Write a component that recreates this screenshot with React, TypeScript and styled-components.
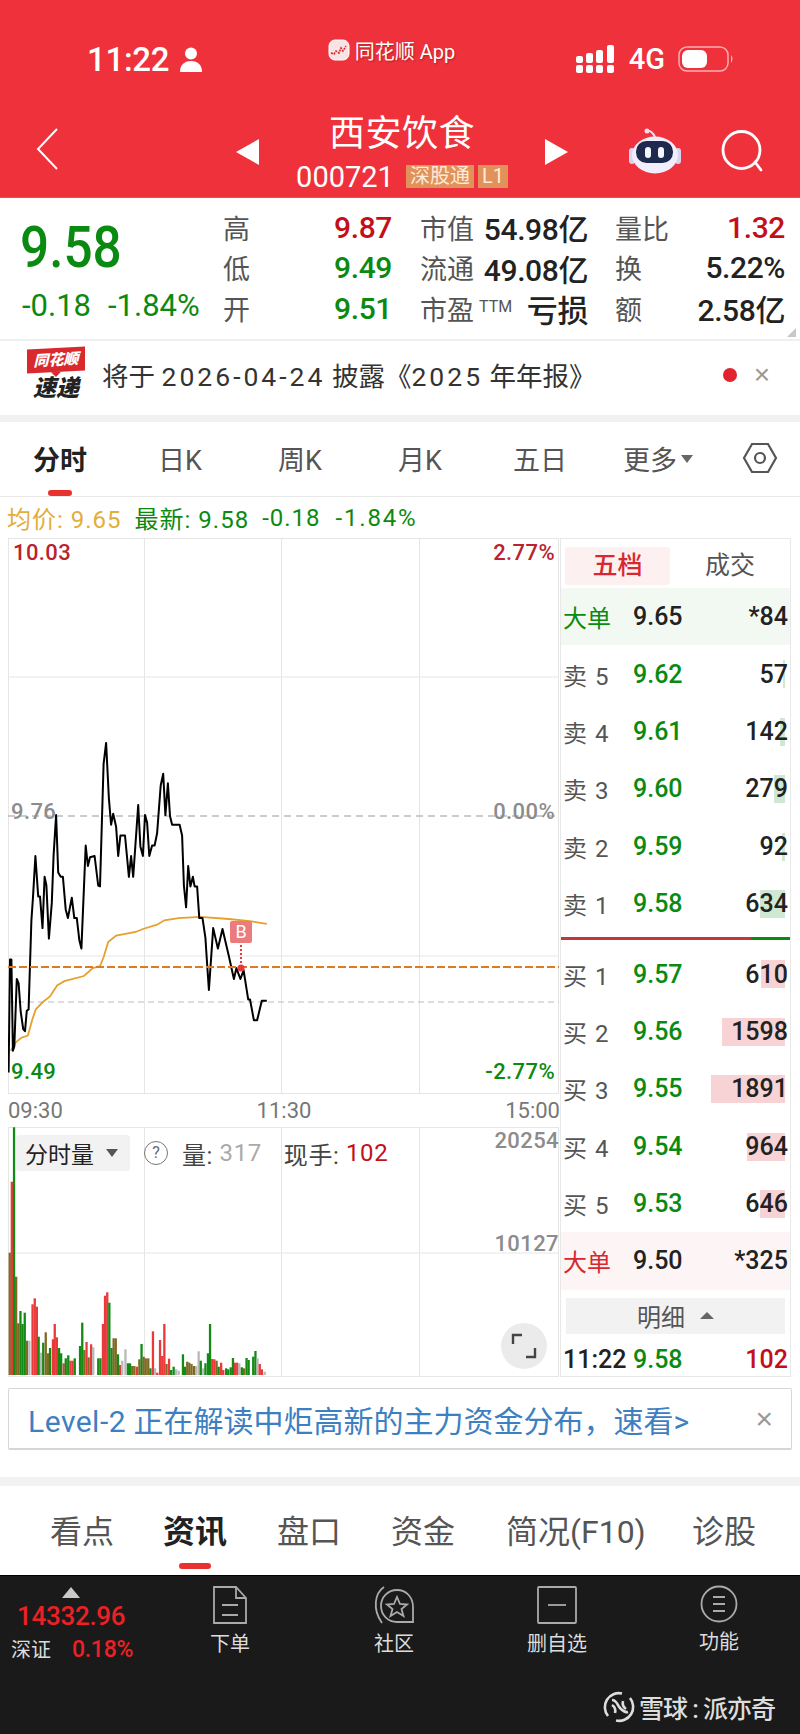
import React from "react";
import styled, { createGlobalStyle } from "styled-components";

const RED = "#c40f1a";
const GREEN = "#0b8a12";
const HEADER_RED = "#ef313b";

const GlobalStyle = createGlobalStyle`
  html, body {
    margin: 0;
    padding: 0;
    background: #fff;
  }
  body {
    font-family: Roboto, "Noto Sans CJK SC", sans-serif;
    color: #222;
  }
  * {
    box-sizing: border-box;
  }
`;

const Page = styled.div`
  width: 800px;
  height: 1734px;
  overflow: hidden;
  background: #fff;
`;

/* ---------- red header ---------- */
const Header = styled.header`
  height: 198px;
  background: ${HEADER_RED};
  color: #fff;
  border-bottom: 1px solid #d8555c;
`;

const StatusBar = styled.div`
  height: 96px;
  display: grid;
  grid-template-columns: 1fr auto 1fr;
  align-items: center;
  padding: 22px 66px 0 87px;
`;

const StatusLeft = styled.div`
  display: flex;
  align-items: center;
  gap: 10px;
  font-size: 33px;
  font-weight: 500;
  letter-spacing: -0.3px;
`;

const AppTag = styled.div`
  display: flex;
  align-items: center;
  gap: 5px;
  margin-top: -18px;
  margin-left: -38px;
  font-size: 20px;
  text-shadow: 1px 1px 2px rgba(120, 0, 0, 0.45);
`;

const StatusRight = styled.div`
  display: flex;
  justify-content: flex-end;
  align-items: center;
  gap: 13px;
  font-size: 29px;
  font-weight: 500;
`;

const NavBar = styled.div`
  height: 101px;
  display: grid;
  grid-template-columns: 1fr 400px 1fr;
  align-items: center;
`;

const BackCell = styled.div`
  padding-left: 35px;
  padding-top: 8px;
`;

const TitleCell = styled.div`
  display: flex;
  justify-content: center;
  align-items: center;
  gap: 36px;
  padding-left: 4px;
`;

const Arrow = styled.span<{ $dir: "left" | "right" }>`
  width: 0;
  height: 0;
  margin-top: 10px;
  border-top: 13px solid transparent;
  border-bottom: 13px solid transparent;
  ${({ $dir }) =>
    $dir === "left" ? "border-right: 23px solid #fff;" : "border-left: 23px solid #fff;"}
`;

const TitleBlock = styled.div`
  display: flex;
  flex-direction: column;
  align-items: center;
  width: 214px;
  margin-top: 7px;
`;

const StockName = styled.div`
  font-size: 36px;
  line-height: 50px;
  letter-spacing: 0.5px;
`;

const CodeRow = styled.div`
  display: flex;
  align-items: center;
  gap: 4px;
  margin-top: 3px;
  font-size: 29px;
  line-height: 30px;
`;

const Code = styled.span`
  margin-right: 8px;
`;

const Badge = styled.span`
  background: #e0925a;
  color: #ffe9d8;
  font-size: 20px;
  line-height: 23px;
  padding: 0 4px;
`;

const NavRight = styled.div`
  display: flex;
  justify-content: flex-end;
  align-items: center;
  gap: 40px;
  padding: 8px 37px 0 0;
`;

/* ---------- quote ---------- */
const Quote = styled.section`
  height: 143px;
  display: grid;
  grid-template-columns: 223px 169px 28px 168px 27px 170px;
  padding: 9px 15px 0 0;
  position: relative;
  border-bottom: 2px solid #f0f0f0;
`;

const PriceBlock = styled.div`
  padding-left: 20px;
  color: ${GREEN};
`;

const BigPrice = styled.div`
  font-size: 57px;
  line-height: 66px;
  font-weight: 500;
  margin-top: 8px;
  transform: scaleX(0.9);
  transform-origin: left center;
`;

const PriceChange = styled.div`
  display: flex;
  gap: 17px;
  margin-top: 8px;
  padding-left: 2px;
  font-size: 31px;
  line-height: 34px;
`;

const QuoteColumn = styled.div<{ $start?: number }>`
  display: grid;
  grid-auto-rows: 40.5px;
  grid-column: ${({ $start }) => $start ?? "auto"};
`;

const QuoteRow = styled.div`
  display: flex;
  justify-content: space-between;
  align-items: center;
`;

const QuoteLabel = styled.span`
  color: #555;
  font-size: 27px;
`;

const Ttm = styled.sup`
  font-size: 16px;
  margin-left: 5px;
  vertical-align: 8px;
  line-height: 0;
`;

const QuoteValue = styled.span<{ $color?: string; $size?: number }>`
  color: ${({ $color }) => $color ?? "#222"};
  font-size: ${({ $size }) => $size ?? 30}px;
  font-weight: 500;
  letter-spacing: -0.4px;
`;

const CornerMark = styled.span`
  position: absolute;
  right: 4px;
  bottom: 2px;
  border-left: 9px solid transparent;
  border-bottom: 9px solid #c8c8c8;
`;

/* ---------- notice ---------- */
const Notice = styled.section`
  height: 81px;
  display: flex;
  align-items: center;
  padding: 0 30px 7px 26px;
  border-bottom: 7px solid #f1f1f1;
`;

const FlashLogo = styled.div`
  width: 60px;
  margin-right: 16px;
  display: flex;
  flex-direction: column;
  align-items: center;
  font-style: italic;
  font-weight: 900;
`;

const FlashTop = styled.div`
  width: 58px;
  height: 24px;
  background: #d9292f;
  color: #fff;
  font-size: 15px;
  line-height: 24px;
  text-align: center;
  white-space: nowrap;
  transform: skewY(-3deg);
  position: relative;
  &::after {
    content: "";
    position: absolute;
    left: 24px;
    bottom: -5px;
    border-left: 5px solid transparent;
    border-right: 5px solid transparent;
    border-top: 5px solid #d9292f;
  }
`;

const FlashBottom = styled.div`
  color: #222;
  font-size: 23px;
  line-height: 24px;
  margin-top: 5px;
`;

const NoticeText = styled.div`
  flex: 1;
  font-size: 26.5px;
  color: #333;
`;

const NoticeNum = styled.span`
  letter-spacing: 3px;
`;

const Dot = styled.span`
  width: 14px;
  height: 14px;
  border-radius: 50%;
  background: #e0232e;
  margin-right: 17px;
`;

const Close = styled.span<{ $size?: number }>`
  color: #999;
  font-size: ${({ $size }) => $size ?? 28}px;
  line-height: 1;
  font-family: "Liberation Sans", sans-serif;
`;

/* ---------- period tabs ---------- */
const PeriodTabs = styled.nav`
  height: 75px;
  display: grid;
  grid-template-columns: repeat(6, 120px) 80px;
  border-bottom: 1px solid #eaeaea;
`;

const PeriodTab = styled.div<{ $active?: boolean }>`
  position: relative;
  display: flex;
  justify-content: center;
  align-items: center;
  padding-bottom: 2px;
  font-size: 27px;
  color: ${({ $active }) => ($active ? "#222" : "#555")};
  font-weight: ${({ $active }) => ($active ? 700 : 400)};
  ${({ $active }) =>
    $active &&
    `&::after {
      content: "";
      position: absolute;
      bottom: 0;
      left: 48px;
      width: 24px;
      height: 6px;
      border-radius: 3px;
      background: #e8322f;
    }`}
`;

const MoreCaret = styled.span`
  margin-left: 4px;
  margin-right: 4px;
  margin-top: 2px;
  border-left: 6px solid transparent;
  border-right: 6px solid transparent;
  border-top: 8px solid #666;
`;

const Legend = styled.div`
  height: 41px;
  display: flex;
  align-items: center;
  padding-left: 7px;
  font-size: 24px;
  letter-spacing: 1px;
  white-space: pre;
`;

const LegendItem = styled.span<{ $color: string; $wide?: boolean }>`
  color: ${({ $color }) => $color};
  margin-right: 13px;
  ${({ $wide }) => ($wide ? "margin-left: 2px; letter-spacing: 1.8px;" : "")}
`;

/* ---------- charts ---------- */
const Board = styled.div`
  height: 840px;
  display: flex;
  padding-left: 8px;
`;

const ChartColumn = styled.div`
  width: 552px;
  display: flex;
  flex-direction: column;
`;

const ChartFrame = styled.div<{ $height: number }>`
  position: relative;
  height: ${({ $height }) => $height}px;
  svg {
    display: block;
  }
`;

const ChartLabel = styled.span<{
  $color: string;
  $left?: number;
  $right?: number;
  $top: number;
}>`
  position: absolute;
  top: ${({ $top }) => $top}px;
  ${({ $left }) => ($left !== undefined ? `left: ${$left}px;` : "")}
  ${({ $right }) => ($right !== undefined ? `right: ${$right}px;` : "")}
  color: ${({ $color }) => $color};
  font-size: 22px;
  line-height: 26px;
  font-weight: 500;
  letter-spacing: 0.4px;
`;

const TimeAxis = styled.div`
  height: 33px;
  display: flex;
  justify-content: space-between;
  align-items: center;
  color: #777;
  font-size: 22px;
`;

const VolumeInfo = styled.div`
  position: absolute;
  top: 8px;
  left: 8px;
  display: flex;
  align-items: center;
  height: 36px;
  font-size: 24px;
  letter-spacing: 0.6px;
  color: #444;
`;

const VolumeSelect = styled.div`
  display: flex;
  align-items: center;
  gap: 12px;
  width: 114px;
  height: 36px;
  padding-left: 9px;
  border-radius: 3px;
  background: #f2f2f2;
  color: #222;
  font-size: 23px;
  letter-spacing: 0;
  margin-right: 14px;
`;

const VolumeCaret = styled.span`
  border-left: 6px solid transparent;
  border-right: 6px solid transparent;
  border-top: 8px solid #555;
`;

const HelpMark = styled.span`
  width: 24px;
  height: 24px;
  border-radius: 50%;
  border: 1.5px solid #777;
  color: #666;
  font-size: 16px;
  line-height: 21px;
  letter-spacing: 0;
  text-align: center;
  margin-right: 14px;
`;

const MutedNum = styled.span<{ $color: string }>`
  color: ${({ $color }) => $color};
  margin-right: 22px;
`;

const ExpandButton = styled.div`
  position: absolute;
  right: 13px;
  bottom: 8px;
  width: 46px;
  height: 46px;
  border-radius: 50%;
  background: #ebebeb;
  display: flex;
  align-items: center;
  justify-content: center;
`;

/* ---------- order book ---------- */
const OrderBook = styled.aside`
  width: 231px;
  border: 1px solid #e8e8e8;
  height: 839px;
`;

const BookTabs = styled.div`
  height: 49px;
  display: grid;
  grid-template-columns: 105px 1fr;
  align-items: center;
  padding: 5px 0 0 4px;
  font-size: 25px;
`;

const BookTab = styled.div<{ $active?: boolean }>`
  height: 38px;
  line-height: 38px;
  text-align: center;
  border-radius: 3px;
  background: ${({ $active }) => ($active ? "#fdf0f0" : "transparent")};
  color: ${({ $active }) => ($active ? "#d8282f" : "#555")};
  font-weight: ${({ $active }) => ($active ? 500 : 400)};
`;

const BookRow = styled.div<{ $bg?: string }>`
  position: relative;
  height: 57.4px;
  display: grid;
  grid-template-columns: 70px 1fr auto;
  align-items: center;
  padding: 0 2px 0 2px;
  background: ${({ $bg }) => $bg ?? "transparent"};
  font-size: 25px;
  font-weight: 500;
`;

const RowLabel = styled.span<{ $color?: string; $big?: boolean }>`
  color: ${({ $color }) => $color ?? "#555"};
  font-size: 24px;
  font-weight: 400;
  ${({ $big }) => ($big ? "" : "letter-spacing: 1px;")}
`;

const RowPrice = styled.span<{ $color?: string }>`
  color: ${({ $color }) => $color ?? GREEN};
`;

const RowVolume = styled.span<{ $color?: string }>`
  position: relative;
  color: ${({ $color }) => $color ?? "#222"};
  z-index: 1;
`;

const DepthBar = styled.span<{ $color: string; $width: number }>`
  position: absolute;
  right: 5px;
  top: 15px;
  height: 28px;
  width: ${({ $width }) => $width}px;
  background: ${({ $color }) => $color};
`;

const BookSplit = styled.div`
  height: 3px;
  margin: 5px 0 5px;
  background: linear-gradient(to right, #c2383a 0 83%, #0b8a12 83% 100%);
`;

const DetailBar = styled.div`
  height: 36px;
  margin: 8px 5px 0;
  background: #f2f2f2;
  color: #555;
  font-size: 24px;
  display: flex;
  align-items: center;
  justify-content: center;
  gap: 15px;
`;

const DetailCaret = styled.span`
  border-left: 7px solid transparent;
  border-right: 7px solid transparent;
  border-bottom: 7px solid #666;
`;

const LastTrade = styled.div`
  height: 44px;
  padding: 8px 2px 0 2px;
  display: grid;
  grid-template-columns: 70px 1fr auto;
  align-items: center;
  font-size: 25px;
  font-weight: 500;
`;

/* ---------- lower part ---------- */
const Promo = styled.div`
  margin: 10px 8px 0;
  height: 62px;
  border: 1px solid #d6d6d6;
  border-bottom-width: 2px;
  border-radius: 2px;
  display: flex;
  align-items: center;
  justify-content: space-between;
  padding: 0 18px 0 19px;
  color: #3d80c2;
  font-size: 30px;
`;

const PromoLevel = styled.span`
  letter-spacing: 0.5px;
`;

const Band = styled.div`
  height: 9px;
  margin-top: 27px;
  background: #f2f2f2;
`;

const InfoTabs = styled.nav`
  height: 89px;
  display: flex;
  padding-left: 50px;
`;

const InfoTab = styled.div<{ $active?: boolean; $width: number }>`
  position: relative;
  width: ${({ $width }) => $width}px;
  padding-top: 25px;
  font-size: 32px;
  line-height: 42px;
  white-space: nowrap;
  color: ${({ $active }) => ($active ? "#222" : "#555")};
  font-weight: ${({ $active }) => ($active ? 700 : 400)};
  ${({ $active }) =>
    $active &&
    `&::after {
      content: "";
      position: absolute;
      left: 16px;
      bottom: 6px;
      width: 32px;
      height: 6px;
      border-radius: 3px;
      background: #e8322f;
    }`}
`;

const BottomBar = styled.footer`
  height: 159px;
  background: #1a1a1a;
  border-top: 1px solid #000;
  position: relative;
  display: grid;
  grid-template-columns: 148px 164px 164px 162px 162px;
  color: #ddd;
`;

const IndexCell = styled.div`
  position: relative;
  padding: 24px 0 0 11px;
`;

const IndexUp = styled.span`
  position: absolute;
  top: 11px;
  left: 62px;
  border-left: 9px solid transparent;
  border-right: 9px solid transparent;
  border-bottom: 11px solid #c9c9c9;
`;

const IndexValue = styled.div`
  padding-left: 6px;
  color: #ea2125;
  font-size: 26px;
  line-height: 32px;
  font-weight: 500;
  letter-spacing: -0.3px;
`;

const IndexMeta = styled.div`
  display: flex;
  align-items: center;
  gap: 21px;
  margin-top: 2px;
  font-size: 20px;
  line-height: 32px;
`;

const IndexChange = styled.span`
  color: #ea2125;
  font-size: 23px;
  font-weight: 500;
  letter-spacing: -0.3px;
`;

const BottomItem = styled.div`
  display: flex;
  flex-direction: column;
  align-items: center;
  padding-top: 9px;
  gap: 5px;
  font-size: 20px;
  line-height: 28px;
`;

const Watermark = styled.div`
  position: absolute;
  right: 25px;
  bottom: 9px;
  display: flex;
  align-items: center;
  gap: 4px;
  color: #ddd;
  font-size: 25px;
`;

const WatermarkName = styled.span`
  letter-spacing: -1px;
  font-weight: 500;
`;

/* ---------- drawings ---------- */
const BackIcon = () => (
  <svg width="24" height="42" viewBox="0 0 24 42" fill="none" stroke="#fff" strokeWidth="2">
    <path d="M22 1 3 21l19 20" />
  </svg>
);

const SearchIcon = () => (
  <svg width="42" height="42" viewBox="0 0 42 42" fill="none" stroke="#fff" strokeWidth="2.8">
    <circle cx="20.5" cy="20" r="18.5" />
    <path d="m34 32 6 8" strokeLinecap="round" />
  </svg>
);

const RobotIcon = () => (
  <svg width="52" height="46" viewBox="0 0 52 46">
    <path d="M18 3c4-1 6 2 8 6" fill="none" stroke="#f5dbe8" strokeWidth="2" />
    <circle cx="18" cy="3" r="2.5" fill="#f5dbe8" />
    <rect x="0" y="20" width="6" height="16" rx="3" fill="#d9d3f3" />
    <rect x="46" y="20" width="6" height="16" rx="3" fill="#d9d3f3" />
    <ellipse cx="26" cy="27" rx="23" ry="18.5" fill="#f1edfb" />
    <rect x="7" y="13" width="37" height="22" rx="10.5" fill="#1e2a4d" />
    <rect x="16" y="19" width="6" height="11" rx="3" fill="#f4f6ff" />
    <rect x="29" y="19" width="6" height="11" rx="3" fill="#f4f6ff" />
  </svg>
);

const PersonIcon = () => (
  <svg width="24" height="25" viewBox="0 0 24 25" fill="#fff">
    <circle cx="12" cy="6.5" r="6" />
    <path d="M1 25c0-7 4-11 11-11s11 4 11 11z" />
  </svg>
);

const AppLogo = () => (
  <svg width="22" height="22" viewBox="0 0 22 22">
    <rect x="1" y="1" width="20" height="20" rx="6" fill="#f8e4e4" stroke="#fff" />
    <path d="M3 14l3 1 2-3 3 2 2-5 2 3 3-5" fill="none" stroke="#d8282f" strokeWidth="1.6" strokeDasharray="2 1" />
  </svg>
);

const SignalIcon = () => (
  <svg width="40" height="28" viewBox="0 0 40 28" fill="#fff">
    {[0, 10, 20, 31].map((x, i) => (
      <React.Fragment key={x}>
        <rect x={x} y={20} width={7} height={8} rx={2} />
        <rect x={x} y={[11, 8, 5, 0][i]} width={7} height={[7, 10, 13, 18][i]} rx={2} />
      </React.Fragment>
    ))}
  </svg>
);

const BatteryIcon = () => (
  <svg width="56" height="26" viewBox="0 0 56 26">
    <rect x="1" y="1" width="49" height="24" rx="8" fill="none" stroke="#f6b0b4" strokeWidth="1.5" />
    <rect x="4" y="4" width="25" height="18" rx="6" fill="#fff" />
    <path d="M53 9c2 2 2 6 0 8z" fill="#f6b0b4" />
  </svg>
);

const HexIcon = () => (
  <svg width="36" height="32" viewBox="0 0 36 32" fill="none" stroke="#555" strokeWidth="2.2">
    <path d="M10 2h16l8 14-8 14H10L2 16z" />
    <circle cx="18" cy="16" r="5" />
  </svg>
);

const ExpandIcon = () => (
  <svg width="26" height="26" viewBox="0 0 26 26" fill="none" stroke="#444" strokeWidth="2.4">
    <path d="M2 11V2h9M24 15v9h-9" />
  </svg>
);

const OrderIcon = () => (
  <svg width="36" height="40" viewBox="0 0 36 40" fill="none" stroke="#aaa" strokeWidth="1.8">
    <path d="M2 2h22l10 11v25H2z" />
    <path d="M24 2v11h10M10 20h16M10 30h16" />
  </svg>
);

const CommunityIcon = () => (
  <svg width="44" height="40" viewBox="0 0 44 40" fill="none" stroke="#aaa" strokeWidth="1.8">
    <path d="M12 2C3 8 0 24 10 38" />
    <path d="M25 5c9 0 16 7 16 17v15H25C16 37 9 30 9 21 9 12 16 5 25 5z" />
    <path d="m25 12 3 7 7 .5-5.5 4.5 2 7-6.5-4-6.5 4 2-7-5.5-4.5 7-.5z" />
  </svg>
);

const WatchIcon = () => (
  <svg width="40" height="40" viewBox="0 0 40 40" fill="none" stroke="#aaa" strokeWidth="1.8">
    <rect x="1" y="2" width="38" height="36" rx="1" />
    <path d="M11 20h18" />
  </svg>
);

const MoreIcon = () => (
  <svg width="38" height="38" viewBox="0 0 38 38" fill="none" stroke="#aaa" strokeWidth="1.8">
    <circle cx="19" cy="19" r="17.5" />
    <path d="M13 12h12M13 19h12M13 26h12" />
  </svg>
);

const SnowLogo = () => (
  <svg width="32" height="32" viewBox="0 0 32 32" fill="none" stroke="#ddd" strokeWidth="2.6">
    <path d="M19 2.5A14 14 0 0 0 5 25" />
    <path d="M13 29.5A14 14 0 0 0 27 7" />
    <path d="M9 9c5 0 5 5 8 8s5 5 8 4" />
    <path d="M9 14c3 2 4 4 3 8M20 10c-1 4 0 6 3 8" />
  </svg>
);

/* ---------- chart data, in px of the reference crop ---------- */
const PRICE_TRACE = [
  24, 1480, 28, 1220, 32, 1220, 36, 1430, 40, 1420, 47, 1265, 52, 1275, 58, 1340, 65, 1380, 70, 1385,
  75, 1338, 80, 1335, 88, 1130, 92, 1080, 99, 982, 107, 1075, 112, 1075, 119, 1148, 125, 1030, 130, 1050,
  137, 1172, 145, 1090, 150, 980, 157, 888, 163, 1020, 170, 1030, 176, 1030, 184, 1105, 190, 1125, 201, 1078,
  208, 1125, 215, 1125, 222, 1175, 228, 1195, 240, 958, 246, 1005, 252, 985, 265, 982, 275, 1050, 280, 1052,
  290, 770, 297, 722, 305, 850, 311, 910, 317, 885, 325, 915, 331, 982, 337, 935, 350, 935, 361, 1030,
  367, 982, 373, 1030, 387, 865, 393, 960, 400, 982, 406, 888, 412, 905, 418, 982, 426, 958, 433, 958,
  440, 930, 450, 820, 457, 793, 463, 888, 470, 815, 476, 890, 482, 910, 503, 910, 510, 935, 515, 1050,
  521, 1100, 527, 1005, 533, 1052, 540, 1030, 545, 1052, 552, 1052, 558, 1125, 567, 1125, 575, 1170, 580, 1230,
  585, 1290, 597, 1148, 610, 1195, 623, 1150, 640, 1210, 655, 1265, 662, 1240, 673, 1265, 682, 1245, 695, 1312,
  700, 1312, 711, 1360, 720, 1360, 733, 1315, 747, 1315,
];

const AVG_TRACE = [
  30, 1430, 45, 1410, 60, 1400, 78, 1395, 90, 1360, 100, 1335, 120, 1318, 140, 1305, 160, 1280, 180, 1270,
  235, 1258, 260, 1240, 280, 1235, 290, 1215, 303, 1180, 325, 1165, 380, 1157, 400, 1150, 440, 1140, 460, 1130,
  500, 1125, 560, 1122, 640, 1127, 700, 1132, 747, 1138,
];

const FRAME_X = (x: number) => x / 2.8 - 8;
const FRAME_Y = (y: number) => y / 2.3 + 430 - 539;

const toPoints = (trace: number[]) => {
  const out: string[] = [];
  for (let i = 0; i < trace.length; i += 2) {
    out.push(`${FRAME_X(trace[i]).toFixed(1)},${FRAME_Y(trace[i + 1]).toFixed(1)}`);
  }
  return out.join(" ");
};

type BarKind = "r" | "g" | "b" | "n";

const BAR_FILL: Record<BarKind, string> = {
  r: "#e8393b",
  g: "#128a14",
  b: "#7f6a24",
  n: "#b9b9b9",
};

// left edge and top edge of each volume bar, as read off the reference
const VOLUME_BARS: [number, number, BarKind][] = [
  [24, 428, "b"], [30, 215, "r"], [36, 52, "g"], [42, 500, "b"], [48, 640, "b"], [54, 603, "g"], [60, 642, "g"],
  [66, 608, "g"], [72, 692, "b"], [79, 692, "n"], [88, 583, "r"], [94, 565, "r"], [100, 590, "r"], [105, 680, "g"],
  [112, 728, "n"], [118, 698, "g"], [125, 667, "b"], [131, 730, "b"], [137, 714, "g"], [145, 688, "r"], [150, 642, "r"],
  [156, 682, "r"], [162, 714, "g"], [168, 730, "g"], [175, 760, "r"], [181, 745, "g"], [188, 736, "g"], [194, 752, "r"],
  [200, 752, "r"], [206, 745, "g"], [221, 708, "g"], [227, 638, "g"], [233, 720, "b"], [239, 696, "r"], [245, 742, "b"],
  [252, 703, "r"], [258, 712, "n"], [272, 745, "g"], [278, 745, "g"], [285, 642, "r"], [291, 557, "r"], [297, 547, "r"],
  [303, 578, "g"], [309, 714, "g"], [315, 685, "b"], [321, 685, "b"], [327, 733, "g"], [333, 765, "r"], [339, 752, "n"],
  [348, 718, "n"], [355, 760, "g"], [361, 760, "g"], [367, 768, "b"], [373, 768, "b"], [380, 770, "r"], [387, 748, "b"],
  [393, 702, "g"], [399, 740, "b"], [405, 745, "b"], [412, 745, "b"], [418, 775, "g"], [425, 664, "r"], [431, 775, "n"],
  [437, 788, "r"], [445, 690, "r"], [451, 738, "r"], [457, 642, "r"], [463, 762, "b"], [470, 746, "r"], [476, 780, "g"],
  [483, 770, "g"], [490, 778, "n"], [497, 782, "n"], [509, 733, "g"], [515, 770, "g"], [521, 755, "b"], [527, 758, "b"],
  [533, 762, "b"], [540, 768, "b"], [546, 768, "n"], [553, 724, "n"], [559, 752, "g"], [566, 775, "n"], [572, 760, "g"],
  [579, 730, "g"], [585, 642, "g"], [591, 747, "r"], [597, 748, "r"], [603, 752, "b"], [609, 770, "g"], [616, 758, "r"],
  [622, 780, "r"], [630, 775, "g"], [636, 778, "g"], [643, 772, "g"], [649, 744, "g"], [655, 758, "r"], [661, 758, "r"],
  [667, 760, "n"], [674, 772, "g"], [680, 775, "b"], [687, 744, "g"], [693, 750, "g"], [706, 740, "g"], [712, 723, "g"],
  [718, 745, "n"], [724, 762, "r"], [730, 778, "r"], [738, 785, "n"],
];

const GRID = "#e6e6e6";

const PriceChart = () => (
  <svg width="552" height="556" viewBox="0 0 552 556">
    <rect x="0.5" y="0.5" width="550" height="555" fill="none" stroke={GRID} />
    {[136, 273, 411].map((x) => (
      <line key={x} x1={x + 0.5} y1="0" x2={x + 0.5} y2="556" stroke={GRID} />
    ))}
    <line x1="0" y1="139" x2="551" y2="139" stroke={GRID} />
    <line x1="0" y1="418" x2="551" y2="418" stroke={GRID} />
    <line x1="0" y1="278" x2="551" y2="278" stroke="#9a9a9a" strokeWidth="1.2" strokeDasharray="7 5" />
    <line x1="0" y1="464" x2="551" y2="464" stroke="#bbb" strokeDasharray="6 4" />
    <polyline points={toPoints(AVG_TRACE)} fill="none" stroke="#e5a02f" strokeWidth="1.8" />
    <polyline points={toPoints(PRICE_TRACE)} fill="none" stroke="#000" strokeWidth="2" strokeLinejoin="round" />
    <line x1="0" y1="429" x2="551" y2="429" stroke="#dd7a22" strokeWidth="2" strokeDasharray="8 3" />
    <line x1="233" y1="407" x2="233" y2="430" stroke="#e8393b" strokeWidth="2" strokeDasharray="2 2" />
    <circle cx="233" cy="430" r="3.5" fill="#e8393b" />
    <rect x="222" y="383" width="22" height="22" rx="2" fill="#ec7b7e" />
    <text x="233" y="400" fontSize="18" fill="#fff" textAnchor="middle" fontFamily="Roboto, sans-serif">
      B
    </text>
  </svg>
);

const VolumeChart = () => (
  <svg width="552" height="250" viewBox="0 0 552 250">
    <rect x="0.5" y="0.5" width="550" height="249" fill="none" stroke={GRID} />
    {[136, 273, 411].map((x) => (
      <line key={x} x1={x + 0.5} y1="0" x2={x + 0.5} y2="250" stroke={GRID} />
    ))}
    <line x1="0" y1="126" x2="551" y2="126" stroke={GRID} />
    {VOLUME_BARS.map(([x, top, kind]) => (
      <rect
        key={x}
        x={(x / 2.8 - 8).toFixed(1)}
        y={(top / 3 - 17).toFixed(1)}
        width="2.3"
        height={((795 - top) / 3).toFixed(1)}
        fill={BAR_FILL[kind]}
      />
    ))}
  </svg>
);

const ASKS = [
  { label: "卖 5", price: "9.62", volume: "57", depth: 2 },
  { label: "卖 4", price: "9.61", volume: "142", depth: 5 },
  { label: "卖 3", price: "9.60", volume: "279", depth: 11 },
  { label: "卖 2", price: "9.59", volume: "92", depth: 3 },
  { label: "卖 1", price: "9.58", volume: "634", depth: 25 },
];

const BIDS = [
  { label: "买 1", price: "9.57", volume: "610", depth: 24 },
  { label: "买 2", price: "9.56", volume: "1598", depth: 63 },
  { label: "买 3", price: "9.55", volume: "1891", depth: 74 },
  { label: "买 4", price: "9.54", volume: "964", depth: 38 },
  { label: "买 5", price: "9.53", volume: "646", depth: 25 },
];

const BOTTOM_ITEMS = [
  { label: "下单", icon: <OrderIcon /> },
  { label: "社区", icon: <CommunityIcon /> },
  { label: "删自选", icon: <WatchIcon /> },
  { label: "功能", icon: <MoreIcon /> },
];

const App: React.FC = () => (
  <Page>
    <GlobalStyle />
    <Header>
      <StatusBar>
        <StatusLeft>
          11:22
          <PersonIcon />
        </StatusLeft>
        <AppTag>
          <AppLogo />
          同花顺 App
        </AppTag>
        <StatusRight>
          <SignalIcon />
          4G
          <BatteryIcon />
        </StatusRight>
      </StatusBar>
      <NavBar>
        <BackCell>
          <BackIcon />
        </BackCell>
        <TitleCell>
          <Arrow $dir="left" />
          <TitleBlock>
            <StockName>西安饮食</StockName>
            <CodeRow>
              <Code>000721</Code>
              <Badge>深股通</Badge>
              <Badge>L1</Badge>
            </CodeRow>
          </TitleBlock>
          <Arrow $dir="right" />
        </TitleCell>
        <NavRight>
          <RobotIcon />
          <SearchIcon />
        </NavRight>
      </NavBar>
    </Header>

    <Quote>
      <PriceBlock>
        <BigPrice>9.58</BigPrice>
        <PriceChange>
          <span>-0.18</span>
          <span>-1.84%</span>
        </PriceChange>
      </PriceBlock>
      <QuoteColumn>
        <QuoteRow>
          <QuoteLabel>高</QuoteLabel>
          <QuoteValue $color={RED}>9.87</QuoteValue>
        </QuoteRow>
        <QuoteRow>
          <QuoteLabel>低</QuoteLabel>
          <QuoteValue $color={GREEN}>9.49</QuoteValue>
        </QuoteRow>
        <QuoteRow>
          <QuoteLabel>开</QuoteLabel>
          <QuoteValue $color={GREEN}>9.51</QuoteValue>
        </QuoteRow>
      </QuoteColumn>
      <QuoteColumn $start={4}>
        <QuoteRow>
          <QuoteLabel>市值</QuoteLabel>
          <QuoteValue>54.98亿</QuoteValue>
        </QuoteRow>
        <QuoteRow>
          <QuoteLabel>流通</QuoteLabel>
          <QuoteValue>49.08亿</QuoteValue>
        </QuoteRow>
        <QuoteRow>
          <QuoteLabel>
            市盈<Ttm>TTM</Ttm>
          </QuoteLabel>
          <QuoteValue $size={31}>亏损</QuoteValue>
        </QuoteRow>
      </QuoteColumn>
      <QuoteColumn $start={6}>
        <QuoteRow>
          <QuoteLabel>量比</QuoteLabel>
          <QuoteValue $color={RED}>1.32</QuoteValue>
        </QuoteRow>
        <QuoteRow>
          <QuoteLabel>换</QuoteLabel>
          <QuoteValue>5.22%</QuoteValue>
        </QuoteRow>
        <QuoteRow>
          <QuoteLabel>额</QuoteLabel>
          <QuoteValue>2.58亿</QuoteValue>
        </QuoteRow>
      </QuoteColumn>
      <CornerMark />
    </Quote>

    <Notice>
      <FlashLogo>
        <FlashTop>同花顺</FlashTop>
        <FlashBottom>速递</FlashBottom>
      </FlashLogo>
      <NoticeText>
        将于 <NoticeNum>2026-04-24</NoticeNum> 披露《<NoticeNum>2025</NoticeNum> 年年报》
      </NoticeText>
      <Dot />
      <Close>×</Close>
    </Notice>

    <PeriodTabs>
      <PeriodTab $active>分时</PeriodTab>
      <PeriodTab>日K</PeriodTab>
      <PeriodTab>周K</PeriodTab>
      <PeriodTab>月K</PeriodTab>
      <PeriodTab>五日</PeriodTab>
      <PeriodTab>
        更多
        <MoreCaret />
      </PeriodTab>
      <PeriodTab>
        <HexIcon />
      </PeriodTab>
    </PeriodTabs>

    <Legend>
      <LegendItem $color="#e2ad3c">均价: 9.65</LegendItem>
      <LegendItem $color={GREEN}>最新: 9.58</LegendItem>
      <LegendItem $color={GREEN}>-0.18</LegendItem>
      <LegendItem $color={GREEN} $wide>-1.84%</LegendItem>
    </Legend>

    <Board>
      <ChartColumn>
        <ChartFrame $height={556}>
          <PriceChart />
          <ChartLabel $color="#b8232e" $left={5} $top={2}>10.03</ChartLabel>
          <ChartLabel $color="#b8232e" $right={5} $top={2}>2.77%</ChartLabel>
          <ChartLabel $color="#8c8c8c" $left={3} $top={261}>9.76</ChartLabel>
          <ChartLabel $color="#8c8c8c" $right={5} $top={261}>0.00%</ChartLabel>
          <ChartLabel $color={GREEN} $left={3} $top={521}>9.49</ChartLabel>
          <ChartLabel $color={GREEN} $right={5} $top={521}>-2.77%</ChartLabel>
        </ChartFrame>
        <TimeAxis>
          <span>09:30</span>
          <span>11:30</span>
          <span>15:00</span>
        </TimeAxis>
        <ChartFrame $height={250}>
          <VolumeChart />
          <VolumeInfo>
            <VolumeSelect>
              分时量
              <VolumeCaret />
            </VolumeSelect>
            <HelpMark>?</HelpMark>
            量:&nbsp;<MutedNum $color="#aaa">317</MutedNum>
            现手:&nbsp;<MutedNum $color={RED}>102</MutedNum>
          </VolumeInfo>
          <ChartLabel $color="#8c8c8c" $right={1} $top={1}>20254</ChartLabel>
          <ChartLabel $color="#8c8c8c" $right={1} $top={104}>10127</ChartLabel>
          <ExpandButton>
            <ExpandIcon />
          </ExpandButton>
        </ChartFrame>
      </ChartColumn>

      <OrderBook>
        <BookTabs>
          <BookTab $active>五档</BookTab>
          <BookTab>成交</BookTab>
        </BookTabs>
        <BookRow $bg="#f2f9f3">
          <RowLabel $big $color={GREEN}>大单</RowLabel>
          <RowPrice $color="#222">9.65</RowPrice>
          <RowVolume>*84</RowVolume>
        </BookRow>
        {ASKS.map((row) => (
          <BookRow key={row.label}>
            <RowLabel>{row.label}</RowLabel>
            <RowPrice>{row.price}</RowPrice>
            <RowVolume>{row.volume}</RowVolume>
            <DepthBar $color="#cfe8d2" $width={row.depth} />
          </BookRow>
        ))}
        <BookSplit />
        {BIDS.map((row) => (
          <BookRow key={row.label}>
            <RowLabel>{row.label}</RowLabel>
            <RowPrice>{row.price}</RowPrice>
            <RowVolume>{row.volume}</RowVolume>
            <DepthBar $color="#f8d3d5" $width={row.depth} />
          </BookRow>
        ))}
        <BookRow $bg="#fdf5f5">
          <RowLabel $big $color="#d8282f">大单</RowLabel>
          <RowPrice $color="#222">9.50</RowPrice>
          <RowVolume>*325</RowVolume>
        </BookRow>
        <DetailBar>
          明细
          <DetailCaret />
        </DetailBar>
        <LastTrade>
          <span>11:22</span>
          <RowPrice>9.58</RowPrice>
          <RowVolume $color={RED}>102</RowVolume>
        </LastTrade>
      </OrderBook>
    </Board>

    <Promo>
      <span>
        <PromoLevel>Level-2</PromoLevel> 正在解读中炬高新的主力资金分布，速看&gt;
      </span>
      <Close $size={30}>×</Close>
    </Promo>
    <Band />

    <InfoTabs>
      <InfoTab $width={113}>看点</InfoTab>
      <InfoTab $active $width={114}>资讯</InfoTab>
      <InfoTab $width={114}>盘口</InfoTab>
      <InfoTab $width={115}>资金</InfoTab>
      <InfoTab $width={186}>简况(F10)</InfoTab>
      <InfoTab $width={64}>诊股</InfoTab>
    </InfoTabs>

    <BottomBar>
      <IndexCell>
        <IndexUp />
        <IndexValue>14332.96</IndexValue>
        <IndexMeta>
          深证
          <IndexChange>0.18%</IndexChange>
        </IndexMeta>
      </IndexCell>
      {BOTTOM_ITEMS.map((item) => (
        <BottomItem key={item.label}>
          {item.icon}
          {item.label}
        </BottomItem>
      ))}
      <Watermark>
        <SnowLogo />
        <WatermarkName>雪球 : 派亦奇</WatermarkName>
      </Watermark>
    </BottomBar>
  </Page>
);

export default App;
